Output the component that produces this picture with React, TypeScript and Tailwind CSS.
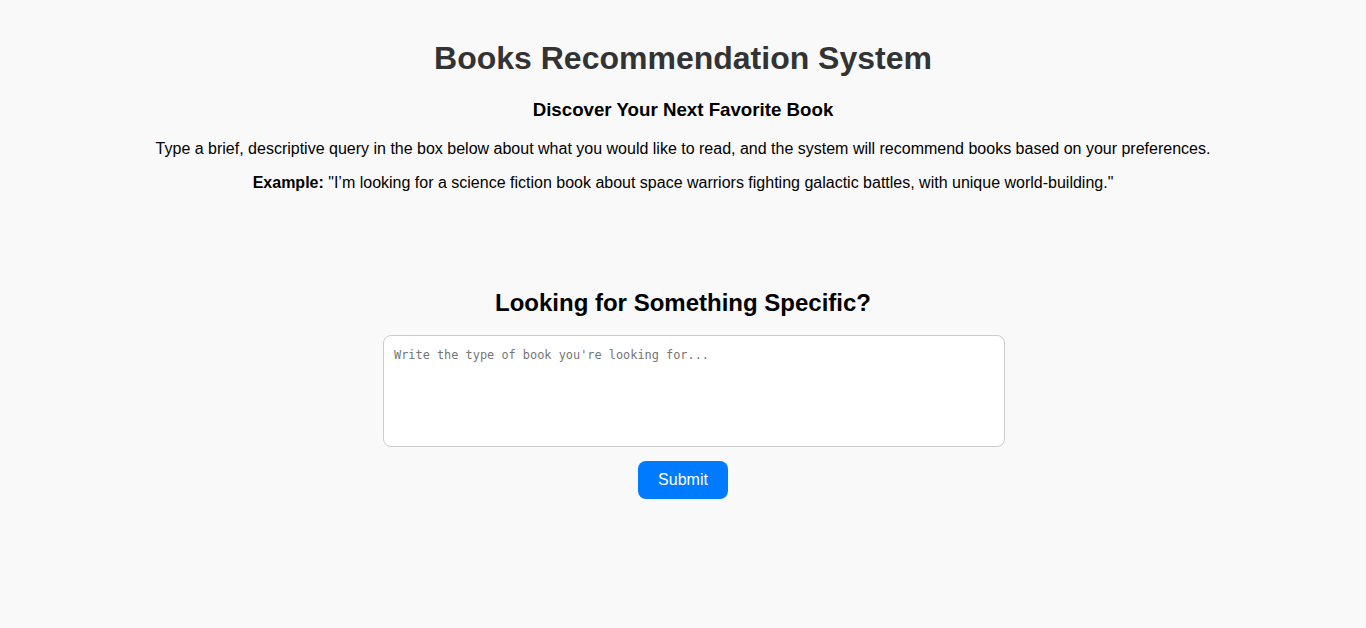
import React from "react";

export default function App() {
  return (
    <div className="min-h-screen bg-[#f9f9f9] pt-[20px] text-center text-black [font-family:'Liberation_Sans',Arial,sans-serif]">
      <h1 className="mt-[20px] mb-[22px] text-[32px] font-bold leading-[normal] text-[#333333]">
        Books Recommendation System
      </h1>
      <h3 className="mb-[19px] text-[18.72px] font-bold leading-[normal]">
        Discover Your Next Favorite Book
      </h3>
      <p className="mb-[16px] text-[16px] leading-[normal]">
        Type a brief, descriptive query in the box below about what you would like to read, and the system will recommend books based on your preferences.
      </p>
      <p className="text-[16px] leading-[normal]">
        <strong>Example:</strong> "I’m looking for a science fiction book about space warriors fighting galactic battles, with unique world-building."
      </p>
      <h2 className="mt-[97px] mb-[18px] text-[24px] font-bold leading-[normal]">
        Looking for Something Specific?
      </h2>
      <div className="mx-auto w-[600px]">
        <textarea
          placeholder="Write the type of book you're looking for..."
          className="block h-[112px] w-[622px] max-w-none resize-none rounded-[8px] border border-[#cccccc] bg-white px-[10px] pt-[12px] pb-[10px] text-left text-[11.9px] leading-[normal] placeholder:text-[#757575] [font-family:'DejaVu_Sans_Mono',monospace]"
        />
      </div>
      <button className="mt-[14px] rounded-[8px] bg-[#007bff] px-[20px] py-[10px] text-[16px] leading-[normal] text-white">
        Submit
      </button>
    </div>
  );
}
